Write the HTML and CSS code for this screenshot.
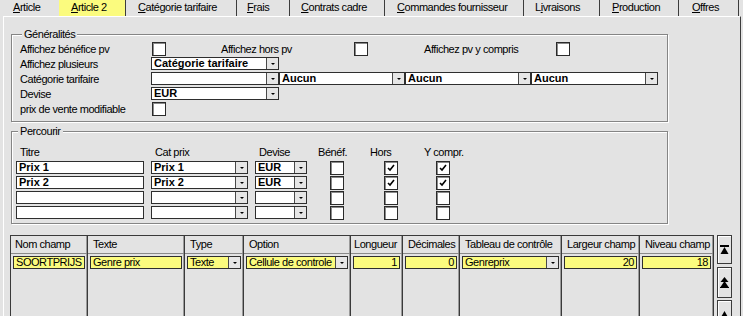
FILE: index.html
```html
<!DOCTYPE html>
<html lang="fr">
<head>
  <meta charset="UTF-8">
  <title>Article 2</title>
  <link rel="stylesheet" href="styles.css">
</head>
<body>
  <div class="tabs">
    <div class="tab tab-article"><u>A</u>rticle</div>
    <div class="tab tab-article2 active"><u>A</u>rticle 2</div>
    <div class="tab tab-cat"><u>C</u>atégorie tarifaire</div>
    <div class="tab tab-frais"><u>F</u>rais</div>
    <div class="tab tab-contrats"><u>C</u>ontrats cadre</div>
    <div class="tab tab-commandes"><u>C</u>ommandes fournisseur</div>
    <div class="tab tab-livraisons">L<u>i</u>vraisons</div>
    <div class="tab tab-production"><u>P</u>roduction</div>
    <div class="tab tab-offres"><u>O</u>ffres</div>
  </div>

  <div class="page">
    <fieldset class="group group-general">
      <legend>Généralités</legend>
      <div class="row">
        <span class="label">Affichez bénéfice pv</span>
        <span class="check"></span>
        <span class="label label-mid">Affichez hors pv</span>
        <span class="check"></span>
        <span class="label label-end">Affichez pv y compris</span>
        <span class="check"></span>
      </div>
      <div class="row">
        <span class="label">Affichez plusieurs</span>
        <div class="combo w128"><span class="value">Catégorie tarifaire</span><span class="drop"></span></div>
      </div>
      <div class="row">
        <span class="label">Catégorie tarifaire</span>
        <div class="combo w128"><span class="value"></span><span class="drop"></span></div>
        <div class="combo w126"><span class="value">Aucun</span><span class="drop"></span></div>
        <div class="combo w126"><span class="value">Aucun</span><span class="drop"></span></div>
        <div class="combo w127"><span class="value">Aucun</span><span class="drop"></span></div>
      </div>
      <div class="row">
        <span class="label">Devise</span>
        <div class="combo w128"><span class="value">EUR</span><span class="drop"></span></div>
      </div>
      <div class="row">
        <span class="label">prix de vente modifiable</span>
        <span class="check"></span>
      </div>
    </fieldset>

    <fieldset class="group group-browse">
      <legend>Percourir</legend>
      <div class="browse">
        <span class="head">Titre</span>
        <span class="head">Cat prix</span>
        <span class="head">Devise</span>
        <span class="head">Bénéf.</span>
        <span class="head head-tight">Hors</span>
        <span class="head">Y compr.</span>

        <div class="field"><span class="value">Prix 1</span></div>
        <div class="combo"><span class="value">Prix 1</span><span class="drop"></span></div>
        <div class="combo"><span class="value">EUR</span><span class="drop"></span></div>
        <span class="cell-check"><span class="check"></span></span>
        <span class="cell-check"><span class="check checked"></span></span>
        <span class="cell-check"><span class="check checked"></span></span>

        <div class="field"><span class="value">Prix 2</span></div>
        <div class="combo"><span class="value">Prix 2</span><span class="drop"></span></div>
        <div class="combo"><span class="value">EUR</span><span class="drop"></span></div>
        <span class="cell-check"><span class="check"></span></span>
        <span class="cell-check"><span class="check checked"></span></span>
        <span class="cell-check"><span class="check checked"></span></span>

        <div class="field"></div>
        <div class="combo"><span class="value"></span><span class="drop"></span></div>
        <div class="combo"><span class="value"></span><span class="drop"></span></div>
        <span class="cell-check"><span class="check"></span></span>
        <span class="cell-check"><span class="check"></span></span>
        <span class="cell-check"><span class="check"></span></span>

        <div class="field"></div>
        <div class="combo"><span class="value"></span><span class="drop"></span></div>
        <div class="combo"><span class="value"></span><span class="drop"></span></div>
        <span class="cell-check"><span class="check"></span></span>
        <span class="cell-check"><span class="check"></span></span>
        <span class="cell-check"><span class="check"></span></span>
      </div>
    </fieldset>

    <div class="grid-area">
      <div class="table">
        <div class="col c1"><div class="th">Nom champ</div><div class="cell">SOORTPRIJS</div></div>
        <div class="col c2"><div class="th">Texte</div><div class="cell">Genre prix</div></div>
        <div class="col c3"><div class="th">Type</div><div class="cell combo-y"><span class="value">Texte</span><span class="drop"></span></div></div>
        <div class="col c4"><div class="th">Option</div><div class="cell combo-y"><span class="value">Cellule de controle</span><span class="drop"></span></div></div>
        <div class="col c5"><div class="th th-narrow">Longueur</div><div class="cell num">1</div></div>
        <div class="col c6"><div class="th">Décimales</div><div class="cell num">0</div></div>
        <div class="col c7"><div class="th">Tableau de contrôle</div><div class="cell combo-y"><span class="value">Genreprix</span><span class="drop"></span></div></div>
        <div class="col c8"><div class="th">Largeur champ</div><div class="cell num">20</div></div>
        <div class="col c9"><div class="th">Niveau champ</div><div class="cell num">18</div></div>
      </div>

      <div class="nav">
        <div class="nav-btn nav-first">
          <svg width="9" height="10" viewBox="0 0 9 10"><rect x="0" y="0" width="9" height="2" fill="#000"/><path d="M4.5 2 L8.5 9 L0.5 9 Z" fill="#000"/></svg>
        </div>
        <div class="nav-btn nav-page">
          <svg width="9" height="11" viewBox="0 0 9 11"><path d="M4.5 0 L8.5 5 L0.5 5 Z" fill="#000"/><path d="M4.5 4 L8.5 10 L0.5 10 Z" fill="#000"/><rect x="0" y="10" width="9" height="1" fill="#000"/></svg>
        </div>
        <div class="nav-btn nav-prev">
          <svg width="9" height="7" viewBox="0 0 9 7"><path d="M4.5 0 L8.5 7 L0.5 7 Z" fill="#000"/></svg>
        </div>
      </div>
    </div>
  </div>
</body>
</html>
```

FILE: styles.css
```css
* {
  box-sizing: border-box;
}

body {
  margin: 0;
  width: 743px;
  height: 316px;
  overflow: hidden;
  background: #e3e3e3;
  font-family: 'Liberation Sans', Arial, sans-serif;
  font-size: 11px;
  letter-spacing: -0.45px;
  color: #000;
}

/* tabs */

.tabs {
  display: flex;
  height: 16px;
  padding-left: 3px;
}

.tab {
  height: 16px;
  line-height: 15px;
  padding-left: 11px;
  border-right: 1px solid #3c3c3c;
  white-space: nowrap;
}

.tab.active {
  background: #fbfb7e;
}

.tab-article { width: 56px; padding-left: 10px; border-right: none; }
.tab-article2 { width: 67px; padding-left: 12px; }
.tab-cat { width: 111px; padding-left: 12px; }
.tab-frais { width: 53px; padding-left: 10px; }
.tab-contrats { width: 95px; }
.tab-commandes { width: 139px; padding-left: 12px; }
.tab-livraisons { width: 76px; }
.tab-production { width: 79px; padding-left: 12px; }
.tab-offres { width: 60px; padding-left: 13px; }

.page {
  margin-left: 3px;
  width: 738px;
  height: 300px;
  border-top: 1px solid #fff;
  border-left: 1px solid #fff;
  border-right: 1px solid #3c3c3c;
}

/* group boxes */

.group {
  margin: 0 0 0 7px;
  width: 657px;
  padding: 0;
  border: 1px solid #858585;
  box-shadow: 1px 1px 0 #fff, inset 1px 1px 0 #fff;
  min-width: 0;
}

.group legend {
  margin-left: 2px;
  padding: 0 2px;
  line-height: 12px;
  background: #e3e3e3;
}

.group-general {
  margin-top: 11px;
  padding: 1px 0 5px 8px;
}

.group-browse {
  margin-top: 3px;
  padding: 9px 0 4px 4px;
}

.row {
  display: flex;
  align-items: center;
  height: 15px;
}

.label {
  width: 131px;
  white-space: nowrap;
}

.label-mid {
  margin-left: 55px;
  width: 132px;
}

.label-end {
  margin-left: 56px;
}

/* controls */

.check {
  display: inline-block;
  width: 14px;
  height: 14px;
  margin-left: 1px;
  background: #fff;
  border: 1px solid #2a2a2a;
  box-shadow: inset 1px 1px 0 #8a8a8a;
  flex: none;
}

.check.checked {
  background: #fff url("data:image/svg+xml;utf8,<svg xmlns='http://www.w3.org/2000/svg' width='12' height='12'><path d='M3 6 L5 8 L9 3' fill='none' stroke='black' stroke-width='1.6'/></svg>") center no-repeat;
}

.combo,
.field {
  display: flex;
  height: 13px;
  background: #fff;
  border: 1px solid #2e2e2e;
}

.combo .value,
.field .value {
  flex: 1;
  padding-left: 2px;
  line-height: 11px;
  font-weight: bold;
  letter-spacing: 0;
  white-space: nowrap;
  overflow: hidden;
}

.drop {
  position: relative;
  width: 12px;
  flex: none;
  background: #e6e6e6;
  border-left: 1px solid #4a4a4a;
}

.drop::after {
  content: "";
  position: absolute;
  left: 4px;
  top: 5px;
  border-left: 2px solid transparent;
  border-right: 2px solid transparent;
  border-top: 2px solid #000;
}

.w128 { width: 128px; }
.w126 { width: 126px; }
.w127 { width: 127px; }

/* browse grid */

.browse {
  display: grid;
  grid-template-columns: 128px 97px 52px 47px 45px 45px;
  grid-template-rows: 13px repeat(4, 13px);
  column-gap: 7px;
  row-gap: 2px;
}

.head {
  padding-left: 4px;
  line-height: 12px;
  white-space: nowrap;
}

.head-tight {
  padding-left: 2px;
}

.cell-check {
  display: flex;
  align-items: center;
  padding-left: 15px;
}

.cell-check .check {
  width: 14px;
  height: 14px;
}

/* fields table */

.grid-area {
  display: flex;
  margin: 11px 0 0 6px;
}

.table {
  display: flex;
  width: 704px;
  height: 90px;
  border-top: 1px solid #3a3a3a;
  border-left: 1px solid #3a3a3a;
}

.col {
  border-right: 1px solid #3a3a3a;
  box-shadow: inset -1px 0 0 #9a9a9a;
}

.c1 { width: 77px; }
.c2 { width: 97px; }
.c3 { width: 59px; }
.c4 { width: 107px; }
.c5 { width: 52px; }
.c6 { width: 57px; }
.c7 { width: 102px; }
.c8 { width: 78px; }
.c9 { width: 74px; }

.th {
  height: 18px;
  padding-left: 5px;
  line-height: 17px;
  white-space: nowrap;
  overflow: hidden;
  border-bottom: 1px solid #8a8a8a;
}

.c1 .th { padding-left: 4px; }
.th-narrow { padding-left: 3px; }

.cell {
  display: flex;
  height: 13px;
  margin: 2px 2px 0 2px;
  padding-left: 2px;
  line-height: 11px;
  background: #fbfb7e;
  border: 1px solid #2e2e2e;
  white-space: nowrap;
  overflow: hidden;
}

.cell.num {
  justify-content: flex-end;
  padding-right: 2px;
}

.combo-y {
  padding-left: 0;
}

.combo-y .value {
  flex: 1;
  padding-left: 2px;
  overflow: hidden;
}

/* record navigator */

.nav {
  display: flex;
  flex-direction: column;
  margin-left: 3px;
  width: 15px;
}

.nav-btn {
  display: flex;
  align-items: center;
  justify-content: center;
  border: 1px solid #3a3a3a;
  box-shadow: inset 1px 1px 0 #fff;
  background: #e3e3e3;
}

.nav-first { height: 29px; }
.nav-page { height: 31px; margin-top: 3px; }
.nav-prev { height: 30px; margin-top: 2px; align-items: flex-start; padding-top: 10px; }
```
